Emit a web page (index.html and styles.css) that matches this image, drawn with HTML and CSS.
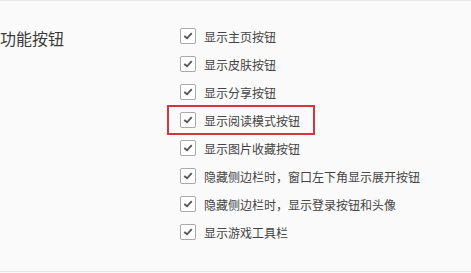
FILE: index.html
```html
<!DOCTYPE html>
<html lang="zh-CN">
  <head>
    <meta charset="UTF-8" />
    <title>功能按钮</title>
    <link rel="stylesheet" href="styles.css">
  </head>
  <body>
    <div class="panel">
      <div class="section">
        <div class="section-title">功能按钮</div>
        <ul class="option-list">
          <li class="option"><span class="check"><svg viewBox="0 0 15 15"><polyline points="3.5,7.5 6.5,10 11.5,4.5" /></svg></span>显示主页按钮</li>
          <li class="option"><span class="check"><svg viewBox="0 0 15 15"><polyline points="3.5,7.5 6.5,10 11.5,4.5" /></svg></span>显示皮肤按钮</li>
          <li class="option"><span class="check"><svg viewBox="0 0 15 15"><polyline points="3.5,7.5 6.5,10 11.5,4.5" /></svg></span>显示分享按钮</li>
          <!-- 标注的一项 -->
          <li class="option marked"><span class="check"><svg viewBox="0 0 15 15"><polyline points="3.5,7.5 6.5,10 11.5,4.5" /></svg></span>显示阅读模式按钮</li>
          <li class="option"><span class="check"><svg viewBox="0 0 15 15"><polyline points="3.5,7.5 6.5,10 11.5,4.5" /></svg></span>显示图片收藏按钮</li>
          <li class="option"><span class="check"><svg viewBox="0 0 15 15"><polyline points="3.5,7.5 6.5,10 11.5,4.5" /></svg></span>隐藏侧边栏时，窗口左下角显示展开按钮</li>
          <li class="option"><span class="check"><svg viewBox="0 0 15 15"><polyline points="3.5,7.5 6.5,10 11.5,4.5" /></svg></span>隐藏侧边栏时，显示登录按钮和头像</li>
          <li class="option"><span class="check"><svg viewBox="0 0 15 15"><polyline points="3.5,7.5 6.5,10 11.5,4.5" /></svg></span>显示游戏工具栏</li>
        </ul>
      </div>
    </div>
  </body>
</html>
```

FILE: styles.css
```css
* {
  margin: 0;
  padding: 0;
  box-sizing: border-box;
}
ul {
  list-style: none;
}

body {
  background-color: #fafafa;
  font-family: "Microsoft YaHei", "Noto Sans CJK SC", sans-serif;
  color: #333;
}

.panel {
  height: 272px;
  border-top: 1px solid #e8e8e8;
  border-bottom: 1px solid #e6e6e6;
}

.section {
  display: flex;
  padding-top: 21px;
}

.section-title {
  width: 168px;
  padding-top: 4px;
  font-size: 16px;
  line-height: 24px;
  color: #3a3a3a;
}

.option {
  display: flex;
  align-items: center;
  width: fit-content;
  height: 28px;
  padding: 0 14px 0 12px;
  font-size: 12px;
  color: #444;
}

.option.marked {
  outline: 2px solid #d5353d;
  outline-offset: -1px;
}

.check {
  display: flex;
  width: 16px;
  height: 16px;
  margin-right: 8px;
  background-color: #fff;
  border: 1px solid #a8a8a8;
  border-radius: 2px;
}

.check svg {
  width: 14px;
  height: 14px;
  fill: none;
  stroke: #555;
  stroke-width: 2;
}
```
